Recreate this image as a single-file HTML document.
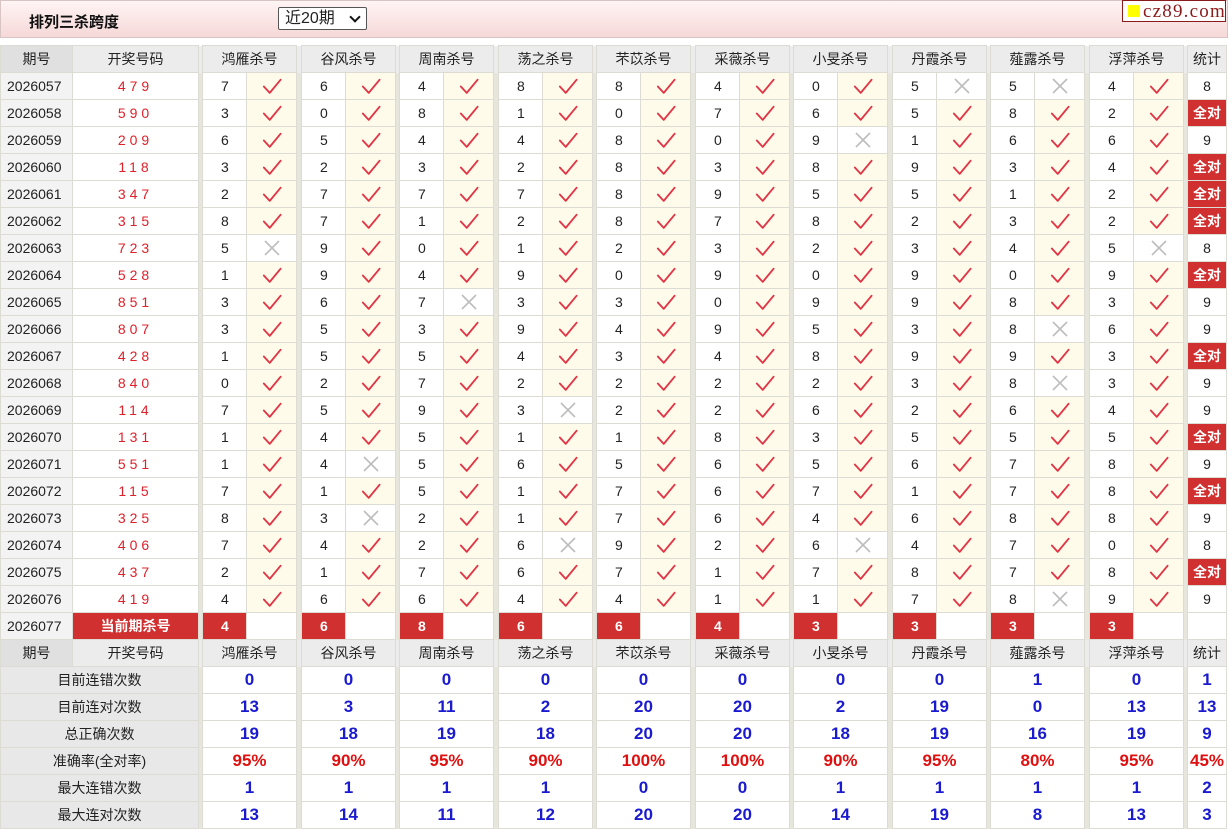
<!DOCTYPE html>
<html><head><meta charset="utf-8"><style>
body{margin:0;width:1228px;height:829px;background:#fff;font-family:"Liberation Sans","Noto Sans CJK SC",sans-serif;font-size:14px;color:#222;overflow:hidden;position:relative}
.top{position:absolute;left:0;top:0;width:1226px;height:36px;background:linear-gradient(#fff4f4,#f6d8d8);border:1px solid #d9c4c4}
.title{position:absolute;left:28px;top:10px;font-weight:bold;font-size:15px;color:#111}
.sel{position:absolute;left:277px;top:6px;border:1px solid #555;border-radius:2px;background:#fff;font-size:16px;line-height:21px;padding-left:6px;box-sizing:border-box;width:89px;height:23px}
.sel i{position:absolute;right:7px;top:5px;width:6px;height:6px;border-right:2px solid #111;border-bottom:2px solid #111;transform:rotate(45deg)}
.logo{position:absolute;left:1122px;top:0;width:104px;height:22px;border:1px solid #8b1a1a;background:#fff;font-family:"Liberation Serif",serif;font-size:19px;color:#8b1a1a;line-height:21px;letter-spacing:1.2px;box-sizing:border-box;padding-left:20px}
.logo b{position:absolute;left:5px;top:4px;width:12px;height:12px;background:#ff0}
table{position:absolute;left:0;top:45px;border-collapse:collapse;table-layout:fixed;width:1226px}
td{border:1px solid #dcdcd4;height:26px;padding:0;text-align:center;white-space:nowrap;overflow:hidden}
td.q{background:#f3f3f3;text-align:left;padding-left:6px}
td.k{color:#e0202a;letter-spacing:4px}
td.s{background:#e6e6dc;border-top:none;border-bottom:none}
td.n{text-align:left;padding-left:18px}
td.c{background:#fffbea}
td.x{background:#fff}
td.t{background:#d03030;color:#fff;font-weight:bold}
tr.h td{background:#ececec}
tr.h td.q0{background:#e0e0e0;text-align:center}
td.r{background:#d03030;color:#fff;font-weight:bold}
td.rn{background:#d03030;color:#fff;font-weight:bold;text-align:left;padding-left:18px}
td.l{background:#e8e8e8}
td.v{color:#1a1ad0;font-weight:bold;font-size:17px}
td.p{color:#e01010;font-weight:bold;font-size:17px}
svg{display:block;margin:auto}
</style></head><body>
<svg width="0" height="0" style="position:absolute"><defs>
<symbol id="ck" viewBox="0 0 22 18"><path d="M2 9 L8.5 16 L20.5 1.5" fill="none" stroke="#e23445" stroke-width="2" stroke-linecap="round" stroke-linejoin="round"/></symbol>
<symbol id="xx" viewBox="0 0 18 18"><path d="M2 2 L16 16 M16 2 L2 16" fill="none" stroke="#bdbdbd" stroke-width="1.6"/></symbol>
</defs></svg>
<div class="top"><span class="title">排列三杀跨度</span><div class="sel">近20期<i></i></div></div>
<div class="logo"><b></b>cz89.com</div>
<table>
<colgroup><col style="width:72px"><col style="width:126px"><col style="width:4px">
<col style="width:44px"><col style="width:50px"><col style="width:5px">
<col style="width:44px"><col style="width:50px"><col style="width:4px">
<col style="width:44px"><col style="width:50px"><col style="width:5px">
<col style="width:44px"><col style="width:50px"><col style="width:4px">
<col style="width:44px"><col style="width:50px"><col style="width:5px">
<col style="width:44px"><col style="width:50px"><col style="width:4px">
<col style="width:44px"><col style="width:50px"><col style="width:5px">
<col style="width:44px"><col style="width:50px"><col style="width:4px">
<col style="width:44px"><col style="width:50px"><col style="width:5px">
<col style="width:44px"><col style="width:50px"><col style="width:4px">
<col style="width:39px"></colgroup>
<tr class="h"><td class="q0">期号</td><td>开奖号码</td><td class="s"></td><td colspan="2">鸿雁杀号</td><td class="s"></td><td colspan="2">谷风杀号</td><td class="s"></td><td colspan="2">周南杀号</td><td class="s"></td><td colspan="2">荡之杀号</td><td class="s"></td><td colspan="2">芣苡杀号</td><td class="s"></td><td colspan="2">采薇杀号</td><td class="s"></td><td colspan="2">小旻杀号</td><td class="s"></td><td colspan="2">丹霞杀号</td><td class="s"></td><td colspan="2">薤露杀号</td><td class="s"></td><td colspan="2">浮萍杀号</td><td class="s"></td><td>统计</td></tr>
<tr><td class="q">2026057</td><td class="k">479</td><td class="s"></td><td class="n">7</td><td class="c"><svg width="20" height="17"><use href="#ck"/></svg></td><td class="s"></td><td class="n">6</td><td class="c"><svg width="20" height="17"><use href="#ck"/></svg></td><td class="s"></td><td class="n">4</td><td class="c"><svg width="20" height="17"><use href="#ck"/></svg></td><td class="s"></td><td class="n">8</td><td class="c"><svg width="20" height="17"><use href="#ck"/></svg></td><td class="s"></td><td class="n">8</td><td class="c"><svg width="20" height="17"><use href="#ck"/></svg></td><td class="s"></td><td class="n">4</td><td class="c"><svg width="20" height="17"><use href="#ck"/></svg></td><td class="s"></td><td class="n">0</td><td class="c"><svg width="20" height="17"><use href="#ck"/></svg></td><td class="s"></td><td class="n">5</td><td class="x"><svg width="18" height="18"><use href="#xx"/></svg></td><td class="s"></td><td class="n">5</td><td class="x"><svg width="18" height="18"><use href="#xx"/></svg></td><td class="s"></td><td class="n">4</td><td class="c"><svg width="20" height="17"><use href="#ck"/></svg></td><td class="s"></td><td>8</td></tr>
<tr><td class="q">2026058</td><td class="k">590</td><td class="s"></td><td class="n">3</td><td class="c"><svg width="20" height="17"><use href="#ck"/></svg></td><td class="s"></td><td class="n">0</td><td class="c"><svg width="20" height="17"><use href="#ck"/></svg></td><td class="s"></td><td class="n">8</td><td class="c"><svg width="20" height="17"><use href="#ck"/></svg></td><td class="s"></td><td class="n">1</td><td class="c"><svg width="20" height="17"><use href="#ck"/></svg></td><td class="s"></td><td class="n">0</td><td class="c"><svg width="20" height="17"><use href="#ck"/></svg></td><td class="s"></td><td class="n">7</td><td class="c"><svg width="20" height="17"><use href="#ck"/></svg></td><td class="s"></td><td class="n">6</td><td class="c"><svg width="20" height="17"><use href="#ck"/></svg></td><td class="s"></td><td class="n">5</td><td class="c"><svg width="20" height="17"><use href="#ck"/></svg></td><td class="s"></td><td class="n">8</td><td class="c"><svg width="20" height="17"><use href="#ck"/></svg></td><td class="s"></td><td class="n">2</td><td class="c"><svg width="20" height="17"><use href="#ck"/></svg></td><td class="s"></td><td class="t">全对</td></tr>
<tr><td class="q">2026059</td><td class="k">209</td><td class="s"></td><td class="n">6</td><td class="c"><svg width="20" height="17"><use href="#ck"/></svg></td><td class="s"></td><td class="n">5</td><td class="c"><svg width="20" height="17"><use href="#ck"/></svg></td><td class="s"></td><td class="n">4</td><td class="c"><svg width="20" height="17"><use href="#ck"/></svg></td><td class="s"></td><td class="n">4</td><td class="c"><svg width="20" height="17"><use href="#ck"/></svg></td><td class="s"></td><td class="n">8</td><td class="c"><svg width="20" height="17"><use href="#ck"/></svg></td><td class="s"></td><td class="n">0</td><td class="c"><svg width="20" height="17"><use href="#ck"/></svg></td><td class="s"></td><td class="n">9</td><td class="x"><svg width="18" height="18"><use href="#xx"/></svg></td><td class="s"></td><td class="n">1</td><td class="c"><svg width="20" height="17"><use href="#ck"/></svg></td><td class="s"></td><td class="n">6</td><td class="c"><svg width="20" height="17"><use href="#ck"/></svg></td><td class="s"></td><td class="n">6</td><td class="c"><svg width="20" height="17"><use href="#ck"/></svg></td><td class="s"></td><td>9</td></tr>
<tr><td class="q">2026060</td><td class="k">118</td><td class="s"></td><td class="n">3</td><td class="c"><svg width="20" height="17"><use href="#ck"/></svg></td><td class="s"></td><td class="n">2</td><td class="c"><svg width="20" height="17"><use href="#ck"/></svg></td><td class="s"></td><td class="n">3</td><td class="c"><svg width="20" height="17"><use href="#ck"/></svg></td><td class="s"></td><td class="n">2</td><td class="c"><svg width="20" height="17"><use href="#ck"/></svg></td><td class="s"></td><td class="n">8</td><td class="c"><svg width="20" height="17"><use href="#ck"/></svg></td><td class="s"></td><td class="n">3</td><td class="c"><svg width="20" height="17"><use href="#ck"/></svg></td><td class="s"></td><td class="n">8</td><td class="c"><svg width="20" height="17"><use href="#ck"/></svg></td><td class="s"></td><td class="n">9</td><td class="c"><svg width="20" height="17"><use href="#ck"/></svg></td><td class="s"></td><td class="n">3</td><td class="c"><svg width="20" height="17"><use href="#ck"/></svg></td><td class="s"></td><td class="n">4</td><td class="c"><svg width="20" height="17"><use href="#ck"/></svg></td><td class="s"></td><td class="t">全对</td></tr>
<tr><td class="q">2026061</td><td class="k">347</td><td class="s"></td><td class="n">2</td><td class="c"><svg width="20" height="17"><use href="#ck"/></svg></td><td class="s"></td><td class="n">7</td><td class="c"><svg width="20" height="17"><use href="#ck"/></svg></td><td class="s"></td><td class="n">7</td><td class="c"><svg width="20" height="17"><use href="#ck"/></svg></td><td class="s"></td><td class="n">7</td><td class="c"><svg width="20" height="17"><use href="#ck"/></svg></td><td class="s"></td><td class="n">8</td><td class="c"><svg width="20" height="17"><use href="#ck"/></svg></td><td class="s"></td><td class="n">9</td><td class="c"><svg width="20" height="17"><use href="#ck"/></svg></td><td class="s"></td><td class="n">5</td><td class="c"><svg width="20" height="17"><use href="#ck"/></svg></td><td class="s"></td><td class="n">5</td><td class="c"><svg width="20" height="17"><use href="#ck"/></svg></td><td class="s"></td><td class="n">1</td><td class="c"><svg width="20" height="17"><use href="#ck"/></svg></td><td class="s"></td><td class="n">2</td><td class="c"><svg width="20" height="17"><use href="#ck"/></svg></td><td class="s"></td><td class="t">全对</td></tr>
<tr><td class="q">2026062</td><td class="k">315</td><td class="s"></td><td class="n">8</td><td class="c"><svg width="20" height="17"><use href="#ck"/></svg></td><td class="s"></td><td class="n">7</td><td class="c"><svg width="20" height="17"><use href="#ck"/></svg></td><td class="s"></td><td class="n">1</td><td class="c"><svg width="20" height="17"><use href="#ck"/></svg></td><td class="s"></td><td class="n">2</td><td class="c"><svg width="20" height="17"><use href="#ck"/></svg></td><td class="s"></td><td class="n">8</td><td class="c"><svg width="20" height="17"><use href="#ck"/></svg></td><td class="s"></td><td class="n">7</td><td class="c"><svg width="20" height="17"><use href="#ck"/></svg></td><td class="s"></td><td class="n">8</td><td class="c"><svg width="20" height="17"><use href="#ck"/></svg></td><td class="s"></td><td class="n">2</td><td class="c"><svg width="20" height="17"><use href="#ck"/></svg></td><td class="s"></td><td class="n">3</td><td class="c"><svg width="20" height="17"><use href="#ck"/></svg></td><td class="s"></td><td class="n">2</td><td class="c"><svg width="20" height="17"><use href="#ck"/></svg></td><td class="s"></td><td class="t">全对</td></tr>
<tr><td class="q">2026063</td><td class="k">723</td><td class="s"></td><td class="n">5</td><td class="x"><svg width="18" height="18"><use href="#xx"/></svg></td><td class="s"></td><td class="n">9</td><td class="c"><svg width="20" height="17"><use href="#ck"/></svg></td><td class="s"></td><td class="n">0</td><td class="c"><svg width="20" height="17"><use href="#ck"/></svg></td><td class="s"></td><td class="n">1</td><td class="c"><svg width="20" height="17"><use href="#ck"/></svg></td><td class="s"></td><td class="n">2</td><td class="c"><svg width="20" height="17"><use href="#ck"/></svg></td><td class="s"></td><td class="n">3</td><td class="c"><svg width="20" height="17"><use href="#ck"/></svg></td><td class="s"></td><td class="n">2</td><td class="c"><svg width="20" height="17"><use href="#ck"/></svg></td><td class="s"></td><td class="n">3</td><td class="c"><svg width="20" height="17"><use href="#ck"/></svg></td><td class="s"></td><td class="n">4</td><td class="c"><svg width="20" height="17"><use href="#ck"/></svg></td><td class="s"></td><td class="n">5</td><td class="x"><svg width="18" height="18"><use href="#xx"/></svg></td><td class="s"></td><td>8</td></tr>
<tr><td class="q">2026064</td><td class="k">528</td><td class="s"></td><td class="n">1</td><td class="c"><svg width="20" height="17"><use href="#ck"/></svg></td><td class="s"></td><td class="n">9</td><td class="c"><svg width="20" height="17"><use href="#ck"/></svg></td><td class="s"></td><td class="n">4</td><td class="c"><svg width="20" height="17"><use href="#ck"/></svg></td><td class="s"></td><td class="n">9</td><td class="c"><svg width="20" height="17"><use href="#ck"/></svg></td><td class="s"></td><td class="n">0</td><td class="c"><svg width="20" height="17"><use href="#ck"/></svg></td><td class="s"></td><td class="n">9</td><td class="c"><svg width="20" height="17"><use href="#ck"/></svg></td><td class="s"></td><td class="n">0</td><td class="c"><svg width="20" height="17"><use href="#ck"/></svg></td><td class="s"></td><td class="n">9</td><td class="c"><svg width="20" height="17"><use href="#ck"/></svg></td><td class="s"></td><td class="n">0</td><td class="c"><svg width="20" height="17"><use href="#ck"/></svg></td><td class="s"></td><td class="n">9</td><td class="c"><svg width="20" height="17"><use href="#ck"/></svg></td><td class="s"></td><td class="t">全对</td></tr>
<tr><td class="q">2026065</td><td class="k">851</td><td class="s"></td><td class="n">3</td><td class="c"><svg width="20" height="17"><use href="#ck"/></svg></td><td class="s"></td><td class="n">6</td><td class="c"><svg width="20" height="17"><use href="#ck"/></svg></td><td class="s"></td><td class="n">7</td><td class="x"><svg width="18" height="18"><use href="#xx"/></svg></td><td class="s"></td><td class="n">3</td><td class="c"><svg width="20" height="17"><use href="#ck"/></svg></td><td class="s"></td><td class="n">3</td><td class="c"><svg width="20" height="17"><use href="#ck"/></svg></td><td class="s"></td><td class="n">0</td><td class="c"><svg width="20" height="17"><use href="#ck"/></svg></td><td class="s"></td><td class="n">9</td><td class="c"><svg width="20" height="17"><use href="#ck"/></svg></td><td class="s"></td><td class="n">9</td><td class="c"><svg width="20" height="17"><use href="#ck"/></svg></td><td class="s"></td><td class="n">8</td><td class="c"><svg width="20" height="17"><use href="#ck"/></svg></td><td class="s"></td><td class="n">3</td><td class="c"><svg width="20" height="17"><use href="#ck"/></svg></td><td class="s"></td><td>9</td></tr>
<tr><td class="q">2026066</td><td class="k">807</td><td class="s"></td><td class="n">3</td><td class="c"><svg width="20" height="17"><use href="#ck"/></svg></td><td class="s"></td><td class="n">5</td><td class="c"><svg width="20" height="17"><use href="#ck"/></svg></td><td class="s"></td><td class="n">3</td><td class="c"><svg width="20" height="17"><use href="#ck"/></svg></td><td class="s"></td><td class="n">9</td><td class="c"><svg width="20" height="17"><use href="#ck"/></svg></td><td class="s"></td><td class="n">4</td><td class="c"><svg width="20" height="17"><use href="#ck"/></svg></td><td class="s"></td><td class="n">9</td><td class="c"><svg width="20" height="17"><use href="#ck"/></svg></td><td class="s"></td><td class="n">5</td><td class="c"><svg width="20" height="17"><use href="#ck"/></svg></td><td class="s"></td><td class="n">3</td><td class="c"><svg width="20" height="17"><use href="#ck"/></svg></td><td class="s"></td><td class="n">8</td><td class="x"><svg width="18" height="18"><use href="#xx"/></svg></td><td class="s"></td><td class="n">6</td><td class="c"><svg width="20" height="17"><use href="#ck"/></svg></td><td class="s"></td><td>9</td></tr>
<tr><td class="q">2026067</td><td class="k">428</td><td class="s"></td><td class="n">1</td><td class="c"><svg width="20" height="17"><use href="#ck"/></svg></td><td class="s"></td><td class="n">5</td><td class="c"><svg width="20" height="17"><use href="#ck"/></svg></td><td class="s"></td><td class="n">5</td><td class="c"><svg width="20" height="17"><use href="#ck"/></svg></td><td class="s"></td><td class="n">4</td><td class="c"><svg width="20" height="17"><use href="#ck"/></svg></td><td class="s"></td><td class="n">3</td><td class="c"><svg width="20" height="17"><use href="#ck"/></svg></td><td class="s"></td><td class="n">4</td><td class="c"><svg width="20" height="17"><use href="#ck"/></svg></td><td class="s"></td><td class="n">8</td><td class="c"><svg width="20" height="17"><use href="#ck"/></svg></td><td class="s"></td><td class="n">9</td><td class="c"><svg width="20" height="17"><use href="#ck"/></svg></td><td class="s"></td><td class="n">9</td><td class="c"><svg width="20" height="17"><use href="#ck"/></svg></td><td class="s"></td><td class="n">3</td><td class="c"><svg width="20" height="17"><use href="#ck"/></svg></td><td class="s"></td><td class="t">全对</td></tr>
<tr><td class="q">2026068</td><td class="k">840</td><td class="s"></td><td class="n">0</td><td class="c"><svg width="20" height="17"><use href="#ck"/></svg></td><td class="s"></td><td class="n">2</td><td class="c"><svg width="20" height="17"><use href="#ck"/></svg></td><td class="s"></td><td class="n">7</td><td class="c"><svg width="20" height="17"><use href="#ck"/></svg></td><td class="s"></td><td class="n">2</td><td class="c"><svg width="20" height="17"><use href="#ck"/></svg></td><td class="s"></td><td class="n">2</td><td class="c"><svg width="20" height="17"><use href="#ck"/></svg></td><td class="s"></td><td class="n">2</td><td class="c"><svg width="20" height="17"><use href="#ck"/></svg></td><td class="s"></td><td class="n">2</td><td class="c"><svg width="20" height="17"><use href="#ck"/></svg></td><td class="s"></td><td class="n">3</td><td class="c"><svg width="20" height="17"><use href="#ck"/></svg></td><td class="s"></td><td class="n">8</td><td class="x"><svg width="18" height="18"><use href="#xx"/></svg></td><td class="s"></td><td class="n">3</td><td class="c"><svg width="20" height="17"><use href="#ck"/></svg></td><td class="s"></td><td>9</td></tr>
<tr><td class="q">2026069</td><td class="k">114</td><td class="s"></td><td class="n">7</td><td class="c"><svg width="20" height="17"><use href="#ck"/></svg></td><td class="s"></td><td class="n">5</td><td class="c"><svg width="20" height="17"><use href="#ck"/></svg></td><td class="s"></td><td class="n">9</td><td class="c"><svg width="20" height="17"><use href="#ck"/></svg></td><td class="s"></td><td class="n">3</td><td class="x"><svg width="18" height="18"><use href="#xx"/></svg></td><td class="s"></td><td class="n">2</td><td class="c"><svg width="20" height="17"><use href="#ck"/></svg></td><td class="s"></td><td class="n">2</td><td class="c"><svg width="20" height="17"><use href="#ck"/></svg></td><td class="s"></td><td class="n">6</td><td class="c"><svg width="20" height="17"><use href="#ck"/></svg></td><td class="s"></td><td class="n">2</td><td class="c"><svg width="20" height="17"><use href="#ck"/></svg></td><td class="s"></td><td class="n">6</td><td class="c"><svg width="20" height="17"><use href="#ck"/></svg></td><td class="s"></td><td class="n">4</td><td class="c"><svg width="20" height="17"><use href="#ck"/></svg></td><td class="s"></td><td>9</td></tr>
<tr><td class="q">2026070</td><td class="k">131</td><td class="s"></td><td class="n">1</td><td class="c"><svg width="20" height="17"><use href="#ck"/></svg></td><td class="s"></td><td class="n">4</td><td class="c"><svg width="20" height="17"><use href="#ck"/></svg></td><td class="s"></td><td class="n">5</td><td class="c"><svg width="20" height="17"><use href="#ck"/></svg></td><td class="s"></td><td class="n">1</td><td class="c"><svg width="20" height="17"><use href="#ck"/></svg></td><td class="s"></td><td class="n">1</td><td class="c"><svg width="20" height="17"><use href="#ck"/></svg></td><td class="s"></td><td class="n">8</td><td class="c"><svg width="20" height="17"><use href="#ck"/></svg></td><td class="s"></td><td class="n">3</td><td class="c"><svg width="20" height="17"><use href="#ck"/></svg></td><td class="s"></td><td class="n">5</td><td class="c"><svg width="20" height="17"><use href="#ck"/></svg></td><td class="s"></td><td class="n">5</td><td class="c"><svg width="20" height="17"><use href="#ck"/></svg></td><td class="s"></td><td class="n">5</td><td class="c"><svg width="20" height="17"><use href="#ck"/></svg></td><td class="s"></td><td class="t">全对</td></tr>
<tr><td class="q">2026071</td><td class="k">551</td><td class="s"></td><td class="n">1</td><td class="c"><svg width="20" height="17"><use href="#ck"/></svg></td><td class="s"></td><td class="n">4</td><td class="x"><svg width="18" height="18"><use href="#xx"/></svg></td><td class="s"></td><td class="n">5</td><td class="c"><svg width="20" height="17"><use href="#ck"/></svg></td><td class="s"></td><td class="n">6</td><td class="c"><svg width="20" height="17"><use href="#ck"/></svg></td><td class="s"></td><td class="n">5</td><td class="c"><svg width="20" height="17"><use href="#ck"/></svg></td><td class="s"></td><td class="n">6</td><td class="c"><svg width="20" height="17"><use href="#ck"/></svg></td><td class="s"></td><td class="n">5</td><td class="c"><svg width="20" height="17"><use href="#ck"/></svg></td><td class="s"></td><td class="n">6</td><td class="c"><svg width="20" height="17"><use href="#ck"/></svg></td><td class="s"></td><td class="n">7</td><td class="c"><svg width="20" height="17"><use href="#ck"/></svg></td><td class="s"></td><td class="n">8</td><td class="c"><svg width="20" height="17"><use href="#ck"/></svg></td><td class="s"></td><td>9</td></tr>
<tr><td class="q">2026072</td><td class="k">115</td><td class="s"></td><td class="n">7</td><td class="c"><svg width="20" height="17"><use href="#ck"/></svg></td><td class="s"></td><td class="n">1</td><td class="c"><svg width="20" height="17"><use href="#ck"/></svg></td><td class="s"></td><td class="n">5</td><td class="c"><svg width="20" height="17"><use href="#ck"/></svg></td><td class="s"></td><td class="n">1</td><td class="c"><svg width="20" height="17"><use href="#ck"/></svg></td><td class="s"></td><td class="n">7</td><td class="c"><svg width="20" height="17"><use href="#ck"/></svg></td><td class="s"></td><td class="n">6</td><td class="c"><svg width="20" height="17"><use href="#ck"/></svg></td><td class="s"></td><td class="n">7</td><td class="c"><svg width="20" height="17"><use href="#ck"/></svg></td><td class="s"></td><td class="n">1</td><td class="c"><svg width="20" height="17"><use href="#ck"/></svg></td><td class="s"></td><td class="n">7</td><td class="c"><svg width="20" height="17"><use href="#ck"/></svg></td><td class="s"></td><td class="n">8</td><td class="c"><svg width="20" height="17"><use href="#ck"/></svg></td><td class="s"></td><td class="t">全对</td></tr>
<tr><td class="q">2026073</td><td class="k">325</td><td class="s"></td><td class="n">8</td><td class="c"><svg width="20" height="17"><use href="#ck"/></svg></td><td class="s"></td><td class="n">3</td><td class="x"><svg width="18" height="18"><use href="#xx"/></svg></td><td class="s"></td><td class="n">2</td><td class="c"><svg width="20" height="17"><use href="#ck"/></svg></td><td class="s"></td><td class="n">1</td><td class="c"><svg width="20" height="17"><use href="#ck"/></svg></td><td class="s"></td><td class="n">7</td><td class="c"><svg width="20" height="17"><use href="#ck"/></svg></td><td class="s"></td><td class="n">6</td><td class="c"><svg width="20" height="17"><use href="#ck"/></svg></td><td class="s"></td><td class="n">4</td><td class="c"><svg width="20" height="17"><use href="#ck"/></svg></td><td class="s"></td><td class="n">6</td><td class="c"><svg width="20" height="17"><use href="#ck"/></svg></td><td class="s"></td><td class="n">8</td><td class="c"><svg width="20" height="17"><use href="#ck"/></svg></td><td class="s"></td><td class="n">8</td><td class="c"><svg width="20" height="17"><use href="#ck"/></svg></td><td class="s"></td><td>9</td></tr>
<tr><td class="q">2026074</td><td class="k">406</td><td class="s"></td><td class="n">7</td><td class="c"><svg width="20" height="17"><use href="#ck"/></svg></td><td class="s"></td><td class="n">4</td><td class="c"><svg width="20" height="17"><use href="#ck"/></svg></td><td class="s"></td><td class="n">2</td><td class="c"><svg width="20" height="17"><use href="#ck"/></svg></td><td class="s"></td><td class="n">6</td><td class="x"><svg width="18" height="18"><use href="#xx"/></svg></td><td class="s"></td><td class="n">9</td><td class="c"><svg width="20" height="17"><use href="#ck"/></svg></td><td class="s"></td><td class="n">2</td><td class="c"><svg width="20" height="17"><use href="#ck"/></svg></td><td class="s"></td><td class="n">6</td><td class="x"><svg width="18" height="18"><use href="#xx"/></svg></td><td class="s"></td><td class="n">4</td><td class="c"><svg width="20" height="17"><use href="#ck"/></svg></td><td class="s"></td><td class="n">7</td><td class="c"><svg width="20" height="17"><use href="#ck"/></svg></td><td class="s"></td><td class="n">0</td><td class="c"><svg width="20" height="17"><use href="#ck"/></svg></td><td class="s"></td><td>8</td></tr>
<tr><td class="q">2026075</td><td class="k">437</td><td class="s"></td><td class="n">2</td><td class="c"><svg width="20" height="17"><use href="#ck"/></svg></td><td class="s"></td><td class="n">1</td><td class="c"><svg width="20" height="17"><use href="#ck"/></svg></td><td class="s"></td><td class="n">7</td><td class="c"><svg width="20" height="17"><use href="#ck"/></svg></td><td class="s"></td><td class="n">6</td><td class="c"><svg width="20" height="17"><use href="#ck"/></svg></td><td class="s"></td><td class="n">7</td><td class="c"><svg width="20" height="17"><use href="#ck"/></svg></td><td class="s"></td><td class="n">1</td><td class="c"><svg width="20" height="17"><use href="#ck"/></svg></td><td class="s"></td><td class="n">7</td><td class="c"><svg width="20" height="17"><use href="#ck"/></svg></td><td class="s"></td><td class="n">8</td><td class="c"><svg width="20" height="17"><use href="#ck"/></svg></td><td class="s"></td><td class="n">7</td><td class="c"><svg width="20" height="17"><use href="#ck"/></svg></td><td class="s"></td><td class="n">8</td><td class="c"><svg width="20" height="17"><use href="#ck"/></svg></td><td class="s"></td><td class="t">全对</td></tr>
<tr><td class="q">2026076</td><td class="k">419</td><td class="s"></td><td class="n">4</td><td class="c"><svg width="20" height="17"><use href="#ck"/></svg></td><td class="s"></td><td class="n">6</td><td class="c"><svg width="20" height="17"><use href="#ck"/></svg></td><td class="s"></td><td class="n">6</td><td class="c"><svg width="20" height="17"><use href="#ck"/></svg></td><td class="s"></td><td class="n">4</td><td class="c"><svg width="20" height="17"><use href="#ck"/></svg></td><td class="s"></td><td class="n">4</td><td class="c"><svg width="20" height="17"><use href="#ck"/></svg></td><td class="s"></td><td class="n">1</td><td class="c"><svg width="20" height="17"><use href="#ck"/></svg></td><td class="s"></td><td class="n">1</td><td class="c"><svg width="20" height="17"><use href="#ck"/></svg></td><td class="s"></td><td class="n">7</td><td class="c"><svg width="20" height="17"><use href="#ck"/></svg></td><td class="s"></td><td class="n">8</td><td class="x"><svg width="18" height="18"><use href="#xx"/></svg></td><td class="s"></td><td class="n">9</td><td class="c"><svg width="20" height="17"><use href="#ck"/></svg></td><td class="s"></td><td>9</td></tr>
<tr><td class="q">2026077</td><td class="r">当前期杀号</td><td class="s"></td><td class="rn">4</td><td></td><td class="s"></td><td class="rn">6</td><td></td><td class="s"></td><td class="rn">8</td><td></td><td class="s"></td><td class="rn">6</td><td></td><td class="s"></td><td class="rn">6</td><td></td><td class="s"></td><td class="rn">4</td><td></td><td class="s"></td><td class="rn">3</td><td></td><td class="s"></td><td class="rn">3</td><td></td><td class="s"></td><td class="rn">3</td><td></td><td class="s"></td><td class="rn">3</td><td></td><td class="s"></td><td></td></tr>
<tr class="h"><td class="q0">期号</td><td>开奖号码</td><td class="s"></td><td colspan="2">鸿雁杀号</td><td class="s"></td><td colspan="2">谷风杀号</td><td class="s"></td><td colspan="2">周南杀号</td><td class="s"></td><td colspan="2">荡之杀号</td><td class="s"></td><td colspan="2">芣苡杀号</td><td class="s"></td><td colspan="2">采薇杀号</td><td class="s"></td><td colspan="2">小旻杀号</td><td class="s"></td><td colspan="2">丹霞杀号</td><td class="s"></td><td colspan="2">薤露杀号</td><td class="s"></td><td colspan="2">浮萍杀号</td><td class="s"></td><td>统计</td></tr>
<tr><td class="l" colspan="2">目前连错次数</td><td class="s"></td><td class="v" colspan="2">0</td><td class="s"></td><td class="v" colspan="2">0</td><td class="s"></td><td class="v" colspan="2">0</td><td class="s"></td><td class="v" colspan="2">0</td><td class="s"></td><td class="v" colspan="2">0</td><td class="s"></td><td class="v" colspan="2">0</td><td class="s"></td><td class="v" colspan="2">0</td><td class="s"></td><td class="v" colspan="2">0</td><td class="s"></td><td class="v" colspan="2">1</td><td class="s"></td><td class="v" colspan="2">0</td><td class="s"></td><td class="v">1</td></tr>
<tr><td class="l" colspan="2">目前连对次数</td><td class="s"></td><td class="v" colspan="2">13</td><td class="s"></td><td class="v" colspan="2">3</td><td class="s"></td><td class="v" colspan="2">11</td><td class="s"></td><td class="v" colspan="2">2</td><td class="s"></td><td class="v" colspan="2">20</td><td class="s"></td><td class="v" colspan="2">20</td><td class="s"></td><td class="v" colspan="2">2</td><td class="s"></td><td class="v" colspan="2">19</td><td class="s"></td><td class="v" colspan="2">0</td><td class="s"></td><td class="v" colspan="2">13</td><td class="s"></td><td class="v">13</td></tr>
<tr><td class="l" colspan="2">总正确次数</td><td class="s"></td><td class="v" colspan="2">19</td><td class="s"></td><td class="v" colspan="2">18</td><td class="s"></td><td class="v" colspan="2">19</td><td class="s"></td><td class="v" colspan="2">18</td><td class="s"></td><td class="v" colspan="2">20</td><td class="s"></td><td class="v" colspan="2">20</td><td class="s"></td><td class="v" colspan="2">18</td><td class="s"></td><td class="v" colspan="2">19</td><td class="s"></td><td class="v" colspan="2">16</td><td class="s"></td><td class="v" colspan="2">19</td><td class="s"></td><td class="v">9</td></tr>
<tr><td class="l" colspan="2">准确率(全对率)</td><td class="s"></td><td class="p" colspan="2">95%</td><td class="s"></td><td class="p" colspan="2">90%</td><td class="s"></td><td class="p" colspan="2">95%</td><td class="s"></td><td class="p" colspan="2">90%</td><td class="s"></td><td class="p" colspan="2">100%</td><td class="s"></td><td class="p" colspan="2">100%</td><td class="s"></td><td class="p" colspan="2">90%</td><td class="s"></td><td class="p" colspan="2">95%</td><td class="s"></td><td class="p" colspan="2">80%</td><td class="s"></td><td class="p" colspan="2">95%</td><td class="s"></td><td class="p">45%</td></tr>
<tr><td class="l" colspan="2">最大连错次数</td><td class="s"></td><td class="v" colspan="2">1</td><td class="s"></td><td class="v" colspan="2">1</td><td class="s"></td><td class="v" colspan="2">1</td><td class="s"></td><td class="v" colspan="2">1</td><td class="s"></td><td class="v" colspan="2">0</td><td class="s"></td><td class="v" colspan="2">0</td><td class="s"></td><td class="v" colspan="2">1</td><td class="s"></td><td class="v" colspan="2">1</td><td class="s"></td><td class="v" colspan="2">1</td><td class="s"></td><td class="v" colspan="2">1</td><td class="s"></td><td class="v">2</td></tr>
<tr><td class="l" colspan="2">最大连对次数</td><td class="s"></td><td class="v" colspan="2">13</td><td class="s"></td><td class="v" colspan="2">14</td><td class="s"></td><td class="v" colspan="2">11</td><td class="s"></td><td class="v" colspan="2">12</td><td class="s"></td><td class="v" colspan="2">20</td><td class="s"></td><td class="v" colspan="2">20</td><td class="s"></td><td class="v" colspan="2">14</td><td class="s"></td><td class="v" colspan="2">19</td><td class="s"></td><td class="v" colspan="2">8</td><td class="s"></td><td class="v" colspan="2">13</td><td class="s"></td><td class="v">3</td></tr>
</table>
</body></html>
